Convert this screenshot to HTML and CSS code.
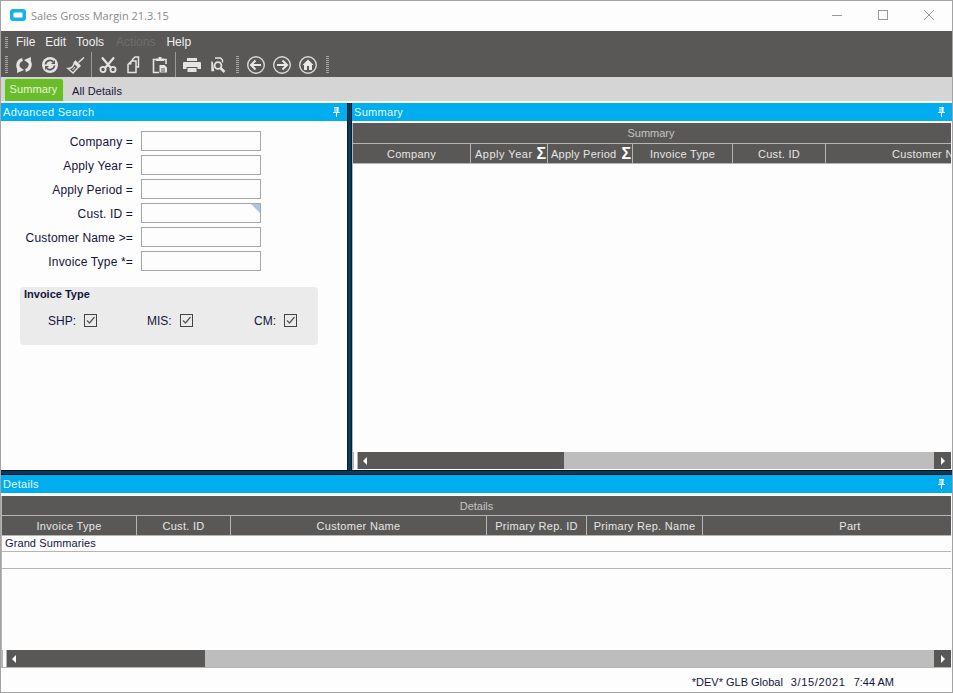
FILE: index.html
```html
<!DOCTYPE html>
<html lang="en">
<head>
<meta charset="utf-8">
<title>Sales Gross Margin 21.3.15</title>
<link rel="stylesheet" href="styles.css">
</head>
<body>
<svg class="defs" width="0" height="0" aria-hidden="true">
  <symbol id="pin" viewBox="0 0 9 10"><path d="M2 0h5v1H6.500v4H8v1H5v4H4V6H1V5h1.500V1H2zM3.500 1v4h1V1z" fill="#fff"/></symbol>
</svg>
<div class="window">
  <header class="titlebar">
    <svg class="app-icon" width="16" height="12" viewBox="0 0 16 12"><rect width="16" height="12" rx="3" fill="#1cb0ea"/><rect x="3.500" y="3.500" width="9" height="5" rx="1" fill="#fff"/></svg>
    <span class="app-title">Sales Gross Margin 21.3.15</span>
    <div class="win-controls">
      <svg width="10" height="10" viewBox="0 0 10 10"><path d="M0 5.500h10" stroke="#999"/></svg>
      <svg width="10" height="10" viewBox="0 0 10 10"><rect x=".5" y=".5" width="9" height="9" fill="none" stroke="#999"/></svg>
      <svg width="10" height="10" viewBox="0 0 10 10"><path d="M0 0l10 10M10 0L0 10" stroke="#999"/></svg>
    </div>
  </header>

  <div class="toolbars">
    <nav class="menubar">
      <span class="grip grip-menu"></span>
      <span class="menu-item m-file">File</span>
      <span class="menu-item m-edit">Edit</span>
      <span class="menu-item m-tools">Tools</span>
      <span class="menu-item m-actions">Actions</span>
      <span class="menu-item">Help</span>
    </nav>
    <div class="iconbar">
      <span class="grip"></span>
      <span class="tool"><svg viewBox="0 0 20 20"><path d="M8.500 4.500A6 6 0 0 0 5.500 14.500" fill="none" stroke="#e4e4e4" stroke-width="3.200"/><path d="M3 18l.5-7.500 6.500 4.500z" fill="#e4e4e4"/><path d="M11.500 15.500A6 6 0 0 0 14.500 5.500" fill="none" stroke="#e4e4e4" stroke-width="3.200"/><path d="M17 2l-.5 7.500L10 5z" fill="#e4e4e4"/></svg></span>
      <span class="tool"><svg viewBox="0 0 20 20"><circle cx="10" cy="10" r="8" fill="#e4e4e4"/><path d="M5.500 9.500a4.600 4.600 0 0 1 7.800-2.800M14.500 10.500a4.600 4.600 0 0 1-7.800 2.800" fill="none" stroke="#595856" stroke-width="1.700"/><path d="M15 5v4h-4zM5 15v-4h4z" fill="#595856"/></svg></span>
      <span class="tool"><svg viewBox="0 0 20 20"><path d="M12.500 7.500L18 2.500" stroke="#e4e4e4" stroke-width="1.500"/><path d="M9.500 6.500l4.500 4.500-3 2.500-4 4.500-5-4.500c2 0 4.500-1 5.500-3.500z" fill="none" stroke="#e4e4e4" stroke-width="1.400"/><path d="M9.500 5.500l5 5-2.500 2-5-4.500z" fill="#e4e4e4"/><path d="M6.500 15l2.500-3" stroke="#e4e4e4"/></svg></span>
      <span class="tool-sep"></span>
      <span class="tool"><svg viewBox="0 0 20 20"><path d="M4 2.500l8.500 10M16 2.500l-8.500 10" stroke="#e4e4e4" stroke-width="2.200"/><circle cx="5" cy="14.500" r="2.600" fill="none" stroke="#e4e4e4" stroke-width="1.800"/><circle cx="15" cy="14.500" r="2.600" fill="none" stroke="#e4e4e4" stroke-width="1.800"/></svg></span>
      <span class="tool"><svg viewBox="0 0 20 20"><path d="M8.500 5.500V4.500l2.500-2.500h3.500v10H12M4 9.500L7.500 6H12v11.500H4z" fill="none" stroke="#e4e4e4" stroke-width="1.500"/><path d="M7.500 6v3.500H4z" fill="#e4e4e4"/></svg></span>
      <span class="tool"><svg viewBox="0 0 20 20"><path d="M6 4.500H3.500v13H9M14 4.500h2V9" fill="none" stroke="#e4e4e4" stroke-width="1.600"/><path d="M6 3.500h2.500V2h3v1.500H14V6H6z" fill="#e4e4e4"/><path d="M9.500 10h5l2.500 2.500v5H9.500z" fill="#e4e4e4"/><path d="M11 14h4M11 16h4" stroke="#595856"/></svg></span>
      <span class="tool-sep"></span>
      <span class="tool"><svg viewBox="0 0 20 20"><rect x="5" y="3" width="10" height="3" fill="#e4e4e4"/><path d="M2 7h16a1 1 0 0 1 1 1v6h-3.500v-2h-11v2H1V8a1 1 0 0 1 1-1z" fill="#e4e4e4"/><rect x="5.500" y="13" width="9" height="4" fill="#e4e4e4"/></svg></span>
      <span class="tool"><svg viewBox="0 0 20 20"><path d="M7 3h5.500l2 2v2.500M5.500 15.500H4V6.500z" fill="none" stroke="#e4e4e4" stroke-width="1.400"/><circle cx="10" cy="10.500" r="3.400" fill="none" stroke="#e4e4e4" stroke-width="1.800"/><path d="M12.500 13l4 4" stroke="#e4e4e4" stroke-width="2.500"/></svg></span>
      <span class="grip grip-gap"></span>
      <span class="tool"><svg viewBox="0 0 20 20"><circle cx="10" cy="10" r="8.300" fill="none" stroke="#d8d8d8" stroke-width="1.400"/><path d="M5 10h10" stroke="#e8e8e8" stroke-width="2"/><path d="M9.500 5.500L5 10l4.500 4.500" fill="none" stroke="#e8e8e8" stroke-width="2"/></svg></span>
      <span class="tool"><svg viewBox="0 0 20 20"><circle cx="10" cy="10" r="8.300" fill="none" stroke="#d8d8d8" stroke-width="1.400"/><path d="M5 10h10" stroke="#e8e8e8" stroke-width="2"/><path d="M10.500 5.500L15 10l-4.500 4.500" fill="none" stroke="#e8e8e8" stroke-width="2"/></svg></span>
      <span class="tool"><svg viewBox="0 0 20 20"><circle cx="10" cy="10" r="8.300" fill="none" stroke="#d8d8d8" stroke-width="1.400"/><path d="M10 4.500l5.500 5.500H14v5H6v-5H4.500z" fill="#e8e8e8"/><rect x="9" y="11" width="2" height="4" fill="#595856"/></svg></span>
      <span class="grip grip-end"></span>
    </div>
  </div>

  <div class="tabs">
    <span class="tab tab-active">Summary</span>
    <span class="tab tab-plain">All Details</span>
  </div>

  <main class="workspace">
    <div class="top-pane">
      <section class="search-panel">
        <div class="panel-head"><span>Advanced Search</span><svg class="pin"><use href="#pin"/></svg></div>
        <form class="search-form">
          <label class="f-label">Company =</label><span class="f-input"></span>
          <label class="f-label">Apply Year =</label><span class="f-input"></span>
          <label class="f-label">Apply Period =</label><span class="f-input"></span>
          <label class="f-label">Cust. ID =</label><span class="f-input f-flag"></span>
          <label class="f-label">Customer Name &gt;=</label><span class="f-input"></span>
          <label class="f-label">Invoice Type *=</label><span class="f-input"></span>
        </form>
        <fieldset class="group">
          <div class="group-title">Invoice Type</div>
          <div class="group-row">
            <span class="check-item">SHP:<span class="check"><svg viewBox="0 0 11 11"><path d="M2 5.500l2.500 2.500L9.500 2" fill="none" stroke="#555" stroke-width="1.200"/></svg></span></span>
            <span class="check-item">MIS:<span class="check"><svg viewBox="0 0 11 11"><path d="M2 5.500l2.500 2.500L9.500 2" fill="none" stroke="#555" stroke-width="1.200"/></svg></span></span>
            <span class="check-item">CM:<span class="check"><svg viewBox="0 0 11 11"><path d="M2 5.500l2.500 2.500L9.500 2" fill="none" stroke="#555" stroke-width="1.200"/></svg></span></span>
          </div>
        </fieldset>
      </section>

      <div class="vsplit"></div>

      <section class="summary-panel">
        <div class="panel-head"><span>Summary</span><svg class="pin"><use href="#pin"/></svg></div>
        <div class="grid grid-summary">
          <div class="grid-title">Summary</div>
          <div class="grid-cols cols-summary">
            <span class="col">Company</span>
            <span class="col col-sigma col-year"><span>Apply Year</span><b class="sigma">Σ</b></span>
            <span class="col col-sigma"><span>Apply Period</span><b class="sigma">Σ</b></span>
            <span class="col">Invoice Type</span>
            <span class="col">Cust. ID</span>
            <span class="col">Customer Name</span>
          </div>
          <div class="grid-body"></div>
          <div class="scrollbar sb-summary">
            <span class="sb-handle"></span>
            <span class="sb-thumb"><i class="arrow-left"></i></span>
            <span class="sb-track"></span>
            <span class="sb-btn"><i class="arrow-right"></i></span>
          </div>
        </div>
      </section>
    </div>

    <div class="hsplit"></div>

    <section class="details-panel">
      <div class="panel-head"><span>Details</span><svg class="pin"><use href="#pin"/></svg></div>
      <div class="grid grid-details">
        <div class="grid-title">Details</div>
        <div class="grid-cols cols-details">
          <span class="col">Invoice Type</span>
          <span class="col">Cust. ID</span>
          <span class="col">Customer Name</span>
          <span class="col">Primary Rep. ID</span>
          <span class="col">Primary Rep. Name</span>
          <span class="col">Part</span>
        </div>
        <div class="row-summary">Grand Summaries</div>
        <div class="row-empty"></div>
        <div class="grid-body"></div>
        <div class="scrollbar sb-details">
          <span class="sb-handle"></span>
          <span class="sb-thumb"><i class="arrow-left"></i></span>
          <span class="sb-track"></span>
          <span class="sb-btn"><i class="arrow-right"></i></span>
        </div>
      </div>
    </section>
  </main>

  <footer class="statusbar">
    <span class="st-company">*DEV* GLB Global</span>
    <span class="st-date">3/15/2021</span>
    <span class="st-time">7:44 AM</span>
  </footer>
</div>
</body>
</html>
```

FILE: styles.css
```css
* { box-sizing: border-box; }
html, body { margin: 0; padding: 0; height: 100%; overflow: hidden; background: #fdfdfd; }
body { font-family: "Liberation Sans", Arial, sans-serif; font-size: 12px; color: #14143c; }
.defs { position: absolute; }

.window {
  width: 953px; height: 693px;
  display: flex; flex-direction: column;
  border: 1px solid #a3a3a3;
  background: #fdfdfd;
}

/* title bar */
.titlebar { height: 30px; flex: none; display: flex; align-items: center; padding: 0 0 2px 9px; background: #fdfdfd; }
.app-icon { flex: none; margin-top: -1px; }
.app-title { margin-left: 5px; font-family: "Open Sans", sans-serif; font-size: 11px; color: #8a8a8a; }
.win-controls { margin-left: auto; display: flex; gap: 36px; padding-right: 18px; }
.win-controls svg { display: block; }

/* toolbars */
.toolbars { flex: none; height: 46px; background: #595856; }
.menubar { height: 21px; display: flex; align-items: center; padding: 1px 0 0 4px; color: #f0f0f0; font-size: 12px; }
.menu-item { margin-right: 11px; }
.m-file { margin-left: 8px; margin-right: 10px; }
.m-edit { margin-right: 10px; }
.m-tools { margin-right: 12px; }
.m-actions { color: #6f6e6c; margin-right: 11px; }
.grip {
  flex: none; display: block; width: 3px; height: 18px;
  background: repeating-linear-gradient(to bottom, #a8a8a8 0 1px, transparent 1px 2px);
}
.grip-menu { height: 11px; }
.iconbar { height: 25px; display: flex; align-items: center; padding: 0 0 0 4px; }
.tool { flex: none; width: 26px; height: 20px; display: flex; justify-content: center; }
.tool svg { width: 20px; height: 20px; display: block; }
.iconbar > .grip:first-child + .tool { margin-left: 3px; }
.tool-sep { flex: none; width: 1px; height: 26px; background: #9a9a98; margin: 0 3px 0 2px; }
.grip-gap { margin: 0 4px 0 5px; }
.grip-end { margin-left: 5px; }

/* tabs */
.tabs { flex: none; height: 24px; background: #d5d5d5; display: flex; align-items: flex-end; padding-left: 3px; }
.tab { height: 20px; display: flex; align-items: center; font-size: 11px; color: #14143c; padding: 0 9px; letter-spacing: .1px; }
.tab-plain { padding: 0 8px 1px 8px; }
.tab-active {
  height: 23px; width: 60px; padding: 0 1px 3px 0; justify-content: center;
  background: #6abd2a; color: #e9f5dc;
  border: 1px solid #c4e3a8; border-bottom: 0; border-radius: 3px 3px 0 0;
}

/* layout */
.workspace { flex: 1; min-height: 0; display: flex; flex-direction: column; padding-top: 2px; }
.top-pane { height: 367px; flex: none; display: flex; }
.search-panel { width: 346px; flex: none; }
.vsplit { width: 5px; flex: none; background: #0b3a58; border-left: 1px solid #06202f; border-right: 1px solid #06202f; }
.summary-panel { flex: 1; min-width: 0; display: flex; flex-direction: column; }
.hsplit { height: 5px; flex: none; background: #0b3a58; border-top: 1px solid #04141e; border-bottom: 1px solid #04141e; }
.details-panel { flex: 1; min-height: 0; display: flex; flex-direction: column; }

.panel-head {
  height: 18px; flex: none; display: flex; align-items: center; justify-content: space-between;
  background: #00adef; color: #e8f7fd; font-size: 11px; letter-spacing: .3px; padding: 0 6px 0 2px;
}
.pin { width: 9px; height: 10px; display: block; }

/* search form */
.search-form {
  display: grid; grid-template-columns: 132px 120px; column-gap: 8px; row-gap: 4px;
  padding-top: 10px; align-items: center;
}
.f-label { text-align: right; font-size: 12px; white-space: nowrap; letter-spacing: .17px; padding-top: 2px; line-height: 16px; }
.f-input { display: block; height: 20px; border: 1px solid #a6a6a6; background: #fdfdfd; position: relative; }
.f-flag::after {
  content: ""; position: absolute; top: 0; right: 0;
  border-style: solid; border-width: 0 9px 9px 0; border-color: transparent #b0c4de transparent transparent;
}
.group {
  margin: 16px 0 0 19px; width: 298px; height: 58px; padding: 1px 0 0 4px;
  border: 0; background: #ebebeb; border-radius: 4px;
}
.group-title { font-weight: bold; font-size: 11px; color: #14143c; }
.group-row { display: grid; grid-template-columns: 99px 107px auto; margin: 14px 0 0 24px; }
.check-item { display: flex; align-items: flex-end; gap: 8px; font-size: 12px; white-space: nowrap; }
.check { display: block; width: 13px; height: 13px; border: 1px solid #444; margin-bottom: 1px; }
.check svg { display: block; width: 11px; height: 11px; }

/* grids */
.grid { flex: 1; min-height: 0; display: flex; flex-direction: column; background: #fdfdfd; margin-right: 1px; }
.grid-summary { margin-top: 2px; border-left: 1px solid #b5b5b5; }
.grid-details { margin-top: 3px; border-left: 1px solid #b5b5b5; }
.grid-title {
  height: 21px; flex: none; background: #595856; border-bottom: 1px solid #b5b5b5;
  color: #c4c4c4; font-size: 11px; text-align: center; padding: 1px 2px 0 0; line-height: 19px;
}
.grid-details .grid-title { height: 20px; line-height: 20px; padding: 0; }
.grid-cols { height: 20px; flex: none; display: grid; overflow: hidden; background: #595856; border-bottom: 1px solid #b5b5b5; }
.cols-summary { grid-template-columns: 118px 77px 85px 100px 93px 216px; }
.cols-details { grid-template-columns: 135px 94px 256px 100px 116px 294px; }
.col {
  display: flex; align-items: center; justify-content: center; white-space: nowrap;
  color: #e6e6e6; font-size: 11px; letter-spacing: .3px; border-right: 1px solid #b5b5b5; min-width: 0;
}
.col:last-child { border-right: 0; }
.col-sigma { justify-content: space-between; padding: 0 1px 0 3px; letter-spacing: .25px; }
.col-year { padding-left: 4px; letter-spacing: .5px; }
.sigma { color: #fff; font-size: 16px; line-height: 18px; letter-spacing: 0; }
.grid-body { flex: 1; min-height: 0; }
.row-summary { height: 16px; flex: none; padding-left: 3px; font-size: 11px; line-height: 15px; color: #14143c; border-bottom: 1px solid #b5b5b5; letter-spacing: .1px; }
.row-empty { height: 17px; flex: none; border-bottom: 1px solid #b5b5b5; }

/* scrollbars */
.scrollbar { height: 18px; flex: none; display: flex; border-bottom: 1px solid #b5b5b5; }
.sb-summary { border-bottom: 1px solid #fdfdfd; }
.sb-handle { width: 5px; flex: none; background: #fdfdfd; border-left: 1px solid #b5b5b5; border-right: 1px solid #b5b5b5; }
.sb-thumb { flex: none; background: #595856; display: flex; align-items: center; padding-left: 5px; }
.sb-summary .sb-thumb { width: 206px; }
.sb-details .sb-thumb { width: 198px; }
.sb-track { flex: 1; background: #bdbdbd; }
.sb-btn { width: 17px; flex: none; background: #595856; display: flex; align-items: center; justify-content: center; }
.arrow-left, .arrow-right { display: block; width: 0; height: 0; border-style: solid; }
.arrow-left { border-width: 4px 4px 4px 0; border-color: transparent #fff transparent transparent; }
.arrow-right { border-width: 4px 0 4px 4px; border-color: transparent transparent transparent #fff; }

/* status bar */
.statusbar { height: 24px; flex: none; display: flex; align-items: center; justify-content: flex-end; padding: 3px 58px 0 0; font-size: 11px; color: #14143c; }
.st-company { margin-right: 8px; }
.st-date { margin-right: 8px; letter-spacing: .65px; }
```
